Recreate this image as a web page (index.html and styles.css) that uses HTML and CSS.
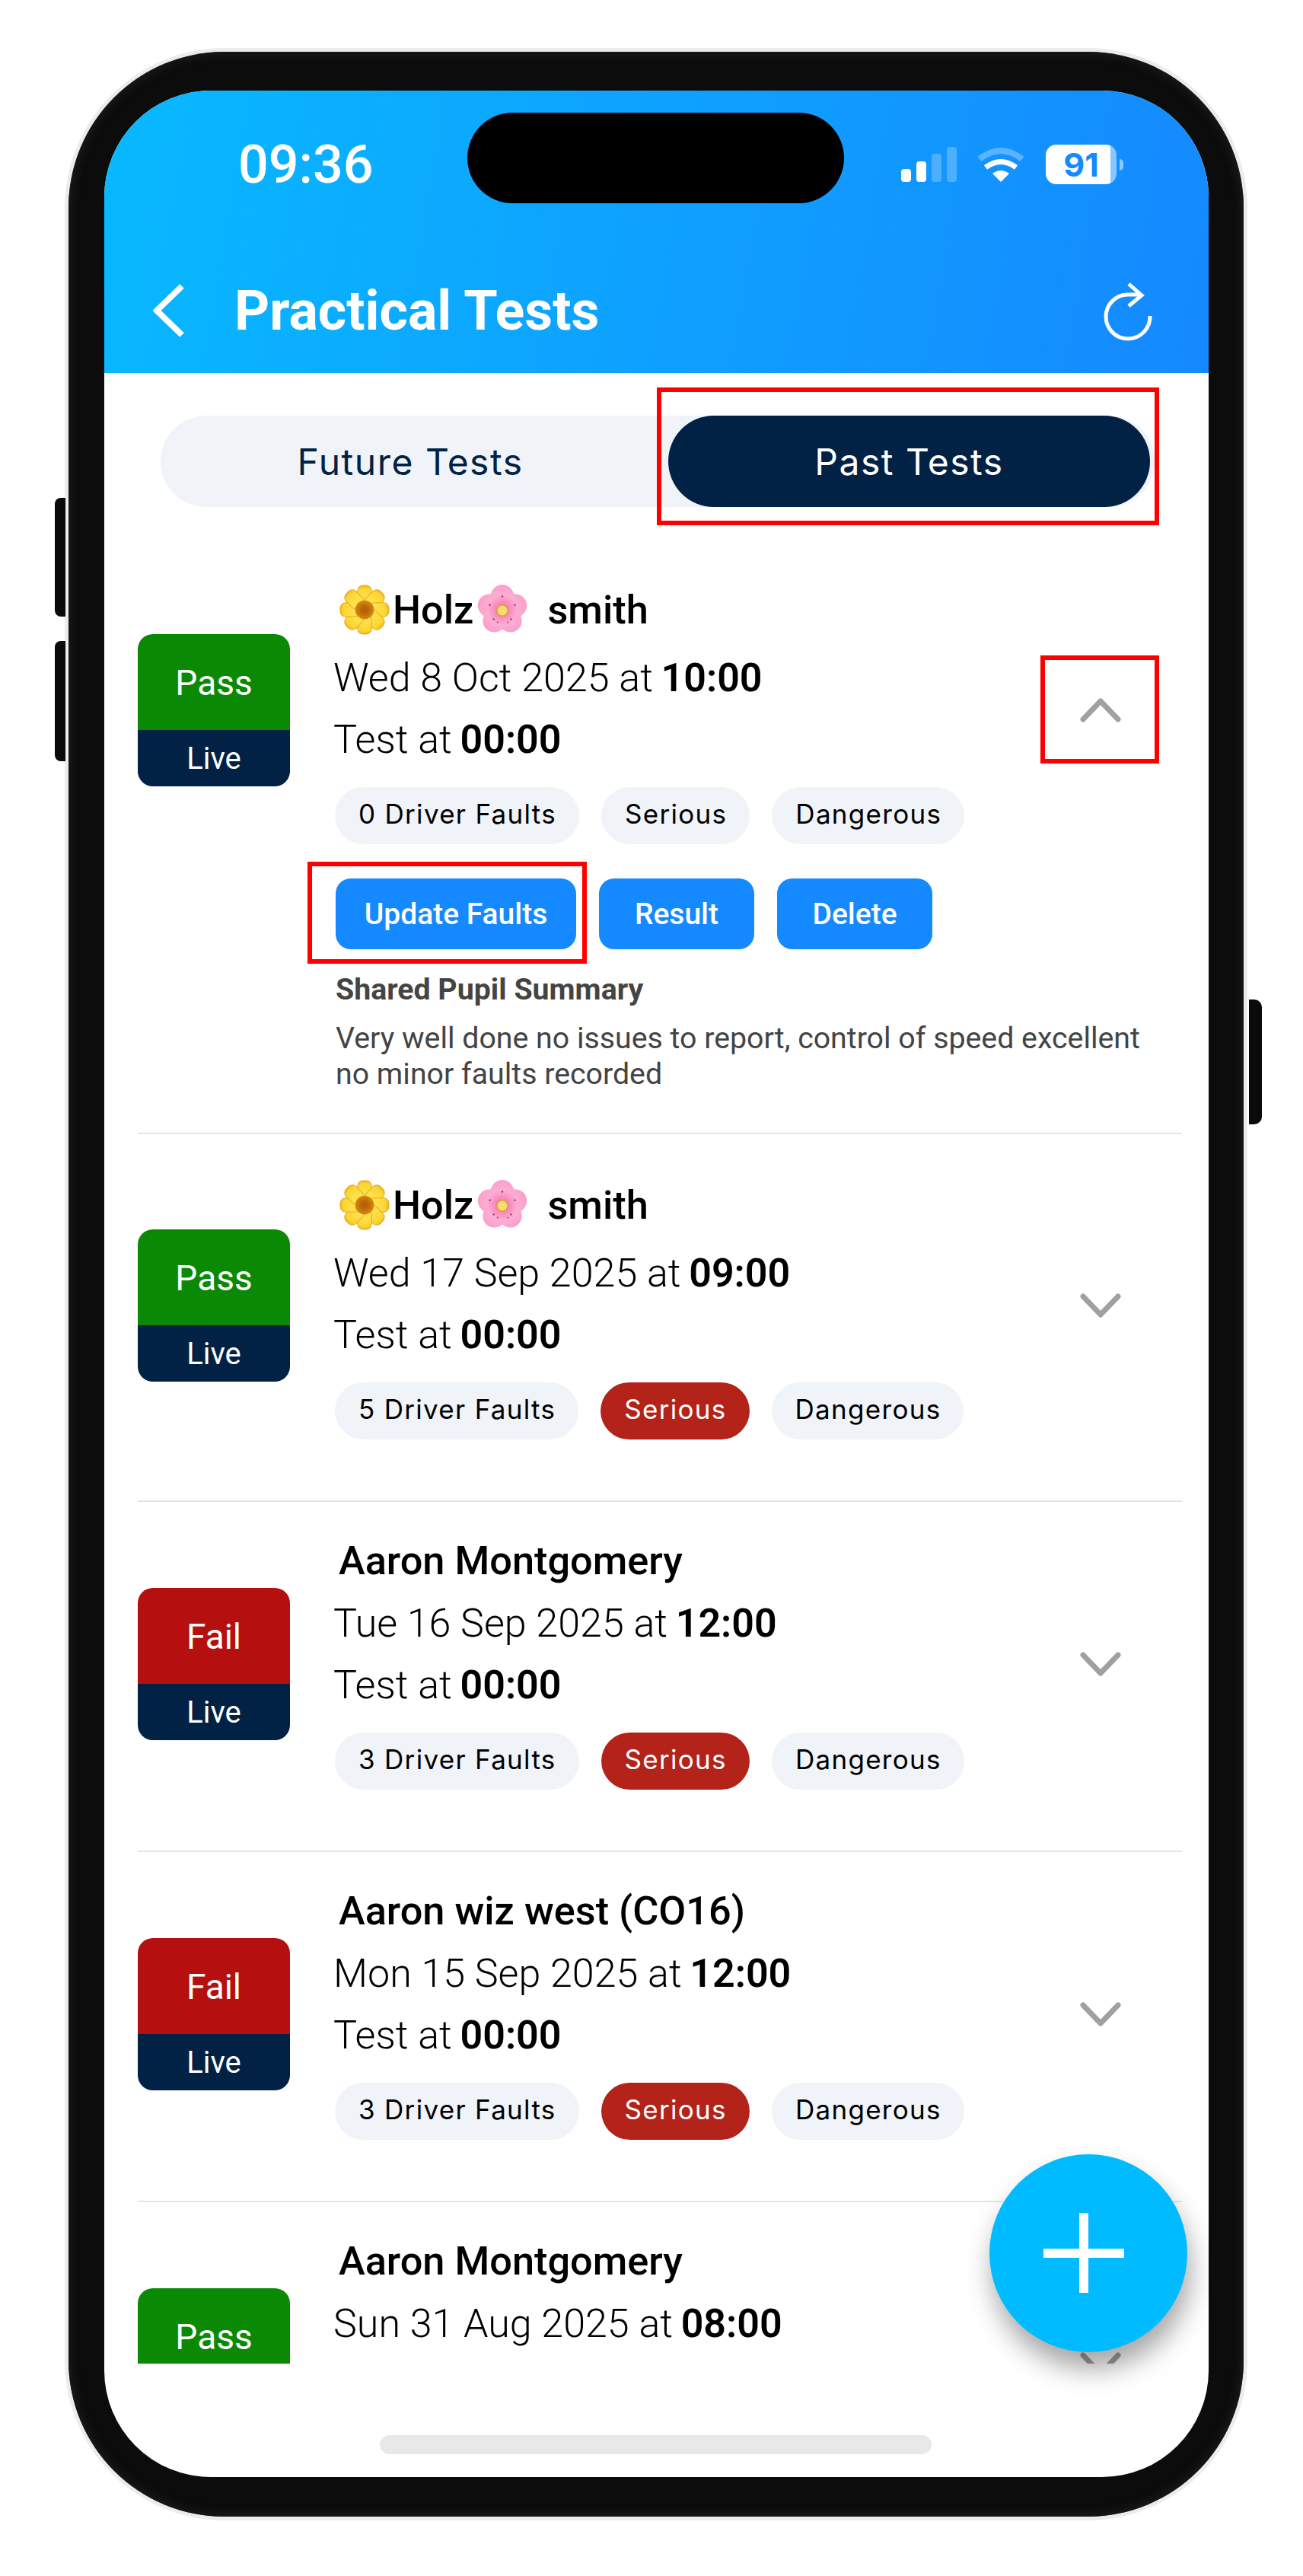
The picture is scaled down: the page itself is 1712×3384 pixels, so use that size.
FILE: index.html
```html
<!DOCTYPE html>
<html lang="en">
<head>
  <meta charset="UTF-8" />
  <meta name="viewport" content="width=device-width, initial-scale=1" />
  <title>Practical Tests</title>
  <link rel="stylesheet" href="styles.css">
</head>
<body>
  <svg class="defs" xmlns="http://www.w3.org/2000/svg">
    <defs>
      <radialGradient id="petal-yellow" gradientUnits="userSpaceOnUse" cx="32" cy="32" r="32">
        <stop offset="0.45" stop-color="#ffe14d" />
        <stop offset="0.85" stop-color="#fbd531" />
        <stop offset="1" stop-color="#e8a91c" />
      </radialGradient>
      <radialGradient id="petal-pink" gradientUnits="userSpaceOnUse" cx="32" cy="32" r="32">
        <stop offset="0.2" stop-color="#f77fb6" />
        <stop offset="0.6" stop-color="#fcaed3" />
        <stop offset="1" stop-color="#fb9ecb" />
      </radialGradient>
      <radialGradient id="flower-eye" cx="0.5" cy="0.5" r="0.5">
        <stop offset="0.3" stop-color="#b5620a" />
        <stop offset="1" stop-color="#d98a0c" />
      </radialGradient>
    </defs>
    <symbol id="sunflower" viewBox="0 0 64 64">
      <g fill="url(#petal-yellow)" stroke="#e8ab22" stroke-width="1">
        <rect x="23" y="1" width="18" height="25" rx="7" />
        <rect x="23" y="1" width="18" height="25" rx="7" transform="rotate(45 32 32)" />
        <rect x="23" y="1" width="18" height="25" rx="7" transform="rotate(90 32 32)" />
        <rect x="23" y="1" width="18" height="25" rx="7" transform="rotate(135 32 32)" />
        <rect x="23" y="1" width="18" height="25" rx="7" transform="rotate(180 32 32)" />
        <rect x="23" y="1" width="18" height="25" rx="7" transform="rotate(225 32 32)" />
        <rect x="23" y="1" width="18" height="25" rx="7" transform="rotate(270 32 32)" />
        <rect x="23" y="1" width="18" height="25" rx="7" transform="rotate(315 32 32)" />
      </g>
      <circle cx="32" cy="32" r="12" fill="url(#flower-eye)" />
    </symbol>
    <symbol id="blossom" viewBox="0 0 64 64">
      <g fill="url(#petal-pink)">
        <ellipse cx="32" cy="15.5" rx="15" ry="15.5" />
        <ellipse cx="32" cy="15.5" rx="15" ry="15.5" transform="rotate(72 32 32)" />
        <ellipse cx="32" cy="15.5" rx="15" ry="15.5" transform="rotate(144 32 32)" />
        <ellipse cx="32" cy="15.5" rx="15" ry="15.5" transform="rotate(216 32 32)" />
        <ellipse cx="32" cy="15.5" rx="15" ry="15.5" transform="rotate(288 32 32)" />
      </g>
      <g fill="#a8326f">
        <circle cx="32" cy="15" r="1.2" /><circle cx="16" cy="26" r="1.2" /><circle cx="48" cy="26" r="1.2" />
        <circle cx="21" cy="44" r="1.2" /><circle cx="43" cy="44" r="1.2" /><circle cx="26" cy="48" r="1" /><circle cx="39" cy="48" r="1" />
      </g>
      <circle cx="32" cy="33" r="7" fill="#f6dc72" stroke="#d9a233" stroke-width="1.5" />
    </symbol>
    <symbol id="chev-down" viewBox="0 0 54 32">
      <path d="M4 4 L27 28 L50 4" fill="none" stroke="#a0a0a0" stroke-width="7" stroke-linecap="round" stroke-linejoin="round" />
    </symbol>
  </svg>

  <div class="phone">
    <span class="side-btn side-btn-a"></span>
    <span class="side-btn side-btn-b"></span>
    <span class="side-btn side-btn-c"></span>

    <div class="screen">
      <div class="island"></div>

      <header class="app-header">
        <div class="status-bar">
          <span class="time">09:36</span>
          <div class="status-icons">
            <div class="signal">
              <span class="bar bar-1"></span>
              <span class="bar bar-2"></span>
              <span class="bar bar-3 dim"></span>
              <span class="bar bar-4 dim"></span>
            </div>
            <svg class="wifi" xmlns="http://www.w3.org/2000/svg" viewBox="0 0 64 46">
              <path d="M4 16 Q32 -6 60 16" fill="none" stroke="#fff" stroke-opacity=".3" stroke-width="8" />
              <path d="M12 27 Q32 12 52 27" fill="none" stroke="#fff" stroke-width="7" />
              <path d="M32 46 L21 35 Q32 27 43 35 Z" fill="#fff" />
            </svg>
            <div class="battery">91</div>
            <span class="battery-nub"></span>
          </div>
        </div>
        <div class="nav-bar">
          <svg class="back" xmlns="http://www.w3.org/2000/svg" viewBox="0 0 41 70">
            <path d="M38 3 L5 35 L38 67" fill="none" stroke="#fff" stroke-width="8" />
          </svg>
          <h1>Practical Tests</h1>
          <svg class="refresh" xmlns="http://www.w3.org/2000/svg" viewBox="0 0 70 80">
            <path d="M61 47 A29 29 0 1 1 32 19 H50 M33 5 L50 20 L33 34" fill="none" stroke="#fff" stroke-width="5" />
          </svg>
        </div>
      </header>

      <div class="tabs">
        <div class="tab">Future Tests</div>
        <div class="tab active">Past Tests<span class="mark mark-tab"></span></div>
      </div>

      <div class="test-list">
        <div class="test-row">
          <div class="row-main">
            <div class="badge"><span class="badge-result pass">Pass</span><span class="badge-type">Live</span></div>
            <div class="info">
              <div class="name has-flowers"><svg class="emoji sun"><use href="#sunflower" /></svg>Holz<svg class="emoji pink"><use href="#blossom" /></svg><span class="surname">smith</span></div>
              <div class="when">Wed 8 Oct 2025 at <b>10:00</b></div>
              <div class="when">Test at <b>00:00</b></div>
              <div class="chips">
                <span class="chip">0 Driver Faults</span>
                <span class="chip">Serious</span>
                <span class="chip">Dangerous</span>
              </div>
            </div>
            <div class="toggle">
              <svg class="chevron up"><use href="#chev-down" /></svg>
              <span class="mark mark-chevron"></span>
            </div>
          </div>
          <div class="row-extra">
            <div class="actions">
              <button class="update">Update Faults<span class="mark mark-update"></span></button>
              <button>Result</button>
              <button>Delete</button>
            </div>
            <h4>Shared Pupil Summary</h4>
            <p>Very well done no issues to report, control of speed excellent<br>no minor faults recorded</p>
          </div>
        </div>

        <div class="test-row">
          <div class="row-main">
            <div class="badge"><span class="badge-result pass">Pass</span><span class="badge-type">Live</span></div>
            <div class="info">
              <div class="name has-flowers"><svg class="emoji sun"><use href="#sunflower" /></svg>Holz<svg class="emoji pink"><use href="#blossom" /></svg><span class="surname">smith</span></div>
              <div class="when">Wed 17 Sep 2025 at <b>09:00</b></div>
              <div class="when">Test at <b>00:00</b></div>
              <div class="chips">
                <span class="chip">5 Driver Faults</span>
                <span class="chip serious">Serious</span>
                <span class="chip">Dangerous</span>
              </div>
            </div>
            <div class="toggle"><svg class="chevron"><use href="#chev-down" /></svg></div>
          </div>
        </div>

        <div class="test-row">
          <div class="row-main">
            <div class="badge"><span class="badge-result fail">Fail</span><span class="badge-type">Live</span></div>
            <div class="info">
              <div class="name">Aaron Montgomery</div>
              <div class="when">Tue 16 Sep 2025 at <b>12:00</b></div>
              <div class="when">Test at <b>00:00</b></div>
              <div class="chips">
                <span class="chip">3 Driver Faults</span>
                <span class="chip serious">Serious</span>
                <span class="chip">Dangerous</span>
              </div>
            </div>
            <div class="toggle"><svg class="chevron"><use href="#chev-down" /></svg></div>
          </div>
        </div>

        <div class="test-row">
          <div class="row-main">
            <div class="badge"><span class="badge-result fail">Fail</span><span class="badge-type">Live</span></div>
            <div class="info">
              <div class="name">Aaron wiz west (CO16)</div>
              <div class="when">Mon 15 Sep 2025 at <b>12:00</b></div>
              <div class="when">Test at <b>00:00</b></div>
              <div class="chips">
                <span class="chip">3 Driver Faults</span>
                <span class="chip serious">Serious</span>
                <span class="chip">Dangerous</span>
              </div>
            </div>
            <div class="toggle"><svg class="chevron"><use href="#chev-down" /></svg></div>
          </div>
        </div>

        <div class="test-row">
          <div class="row-main">
            <div class="badge"><span class="badge-result pass">Pass</span><span class="badge-type">Live</span></div>
            <div class="info">
              <div class="name">Aaron Montgomery</div>
              <div class="when">Sun 31 Aug 2025 at <b>08:00</b></div>
              <div class="when">Test at <b>00:00</b></div>
              <div class="chips">
                <span class="chip">0 Driver Faults</span>
                <span class="chip">Serious</span>
                <span class="chip">Dangerous</span>
              </div>
            </div>
            <div class="toggle"><svg class="chevron"><use href="#chev-down" /></svg></div>
          </div>
        </div>
      </div>

      <div class="home-area"><span class="home-bar"></span></div>

      <div class="fab"><span class="plus"></span></div>
    </div>
  </div>
</body>
</html>
```

FILE: styles.css
```css
* {
  margin: 0;
  padding: 0;
  box-sizing: border-box;
}
body {
  font-family: 'Roboto', sans-serif;
  background-color: #ffffff;
  color: #000000;
  height: 3384px;
  overflow: hidden;
}
.defs {
  position: absolute;
  width: 0;
  height: 0;
}
.phone {
  position: relative;
  width: 1544px;
  height: 3238px;
  margin: 68px 0 0 90px;
  padding: 51px 46px 52px 47px;
  background: #0c0c0c;
  border-radius: 205px;
  box-shadow: 0 0 0 5px #ececec, inset 0 0 12px 4px #1b1b1b;
}
.side-btn {
  position: absolute;
  width: 14px;
  background: #0a0a0a;
}
.side-btn-a {
  left: -18px;
  top: 586px;
  height: 156px;
  border-radius: 8px 0 0 8px;
}
.side-btn-b {
  left: -18px;
  top: 774px;
  height: 158px;
  border-radius: 8px 0 0 8px;
}
.side-btn-c {
  right: -24px;
  top: 1245px;
  height: 164px;
  width: 17px;
  border-radius: 0 10px 10px 0;
}
.screen {
  position: relative;
  display: flex;
  flex-direction: column;
  width: 1451px;
  height: 3135px;
  background: #ffffff;
  border-radius: 140px;
  overflow: hidden;
}
.island {
  position: absolute;
  left: 477px;
  top: 29px;
  width: 495px;
  height: 119px;
  background: #000000;
  border-radius: 60px;
}

/* header */
.app-header {
  flex: none;
  height: 371px;
  background: linear-gradient(100deg, #08b9ff, #1589ff);
  color: #ffffff;
}
.status-bar {
  display: flex;
  justify-content: space-between;
  align-items: center;
  height: 207px;
  padding: 71px 112px 84px 176px;
}
.time {
  font-size: 70px;
  font-weight: 500;
}
.status-icons {
  display: flex;
  align-items: center;
}
.signal {
  display: flex;
  align-items: flex-end;
  gap: 7px;
  height: 46px;
  margin-right: 26px;
}
.bar {
  width: 13px;
  background: #ffffff;
  border-radius: 4px;
}
.bar.dim {
  opacity: 0.25;
}
.bar-1 { height: 17px; }
.bar-2 { height: 27px; }
.bar-3 { height: 37px; }
.bar-4 { height: 46px; }
.wifi {
  width: 64px;
  height: 46px;
  margin-right: 27px;
}
.battery {
  width: 93px;
  height: 52px;
  border-radius: 14px;
  background: linear-gradient(90deg, #ffffff 91%, rgba(255, 255, 255, 0.5) 91%);
  color: #1589ff;
  font-family: 'Inter', sans-serif;
  font-size: 43px;
  font-weight: 700;
  line-height: 52px;
  text-align: center;
}
.battery-nub {
  width: 5px;
  height: 15px;
  margin-left: 4px;
  background: rgba(255, 255, 255, 0.5);
  border-radius: 0 6px 6px 0;
}
.nav-bar {
  display: flex;
  align-items: center;
  height: 164px;
  padding: 0 68px 0 64px;
}
.back {
  width: 41px;
  height: 70px;
}
.nav-bar h1 {
  margin-left: 66px;
  font-size: 71.8px;
  font-weight: 700;
}
.refresh {
  width: 70px;
  height: 80px;
  margin-left: auto;
}

/* tabs */
.tabs {
  flex: none;
  display: flex;
  gap: 11px;
  height: 120px;
  margin: 56px 71px 42px 74px;
  padding-right: 6px;
  background: #f0f3f8;
  border-radius: 60px;
}
.tab {
  position: relative;
  flex: 1;
  display: flex;
  align-items: center;
  justify-content: center;
  font-family: 'Inter', sans-serif;
  font-size: 48px;
  letter-spacing: 1.5px;
  color: #012145;
  border-radius: 60px;
}
.tab:first-child {
  flex: none;
  width: 656px;
}
.tab.active {
  background: #012145;
  color: #ffffff;
}

/* red marks drawn on top of the screenshot */
.mark {
  position: absolute;
  border: 6px solid #ff0000;
  pointer-events: none;
}
.mark-tab {
  inset: -37px -12px -24px -15px;
}
.mark-chevron {
  left: -52px;
  top: -56px;
  width: 156px;
  height: 142px;
}
.mark-update {
  inset: -22px -14px -19px -37px;
}

/* list */
.test-list {
  flex: 1;
  min-height: 0;
  padding: 0 35px 0 44px;
  overflow: hidden;
}
.test-row {
  padding: 36px 0 80px;
  border-bottom: 2px solid #e4e4e4;
}
.test-row:nth-child(1) {
  padding-bottom: 0;
}
.row-main {
  display: flex;
  align-items: center;
}
.badge {
  flex: none;
  display: flex;
  flex-direction: column;
  width: 200px;
  height: 200px;
  margin-top: 12px;
  border-radius: 20px;
  overflow: hidden;
  color: #ffffff;
  text-align: center;
}
.badge-result {
  height: 126px;
  font-size: 46px;
  line-height: 128px;
}
.badge-result.pass {
  background: #0a8a04;
}
.badge-result.fail {
  background: #b50f0f;
}
.badge-type {
  flex: 1;
  background: #012145;
  font-size: 40px;
  line-height: 76px;
}
.info {
  flex: 1;
  margin-left: 59px;
}
.name {
  height: 83px;
  padding-left: 5px;
  font-size: 52.3px;
  font-weight: 500;
  line-height: 82px;
  white-space: nowrap;
}
.name.has-flowers {
  display: flex;
  align-items: center;
  height: 106px;
  padding: 16px 0 8px 6px;
}
.emoji {
  width: 66px;
  height: 66px;
}
.emoji.sun {
  margin-right: 4px;
}
.emoji.pink {
  margin-left: 5px;
}
.surname {
  margin-left: 26px;
}
.when {
  height: 81px;
  margin-left: -2px;
  font-size: 52px;
  font-weight: 300;
  line-height: 81px;
}
.when b {
  margin-left: -2px;
  font-weight: 600;
}
.chips {
  display: flex;
  gap: 29px;
  margin-top: 22px;
}
.chip {
  height: 75px;
  padding: 0 30px 0 31px;
  background: #f0f3f8;
  border-radius: 38px;
  font-family: 'Inter', sans-serif;
  font-size: 35px;
  letter-spacing: 1.3px;
  line-height: 71px;
}
.chip.serious {
  background: #b3231a;
  color: #ffffff;
}
.toggle {
  position: relative;
  flex: none;
  width: 54px;
  height: 32px;
  margin: 12px 80px 0 0;
}
.chevron {
  display: block;
  width: 54px;
  height: 32px;
}
.chevron.up {
  transform: scaleY(-1);
}
.row-extra {
  margin: 45px 0 0 260px;
  padding-bottom: 53px;
}
.actions {
  display: flex;
  gap: 30px;
}
.actions button {
  position: relative;
  width: 204px;
  height: 93px;
  background: #1589ff;
  border: none;
  border-radius: 20px;
  color: #ffffff;
  font-family: 'Roboto', sans-serif;
  font-size: 39px;
  font-weight: 500;
}
.actions button.update {
  width: 316px;
}
.row-extra h4 {
  margin-top: 30px;
  color: #444444;
  font-size: 39.3px;
  font-weight: 700;
  line-height: 46px;
}
.row-extra p {
  margin-top: 18px;
  color: #444444;
  font-size: 39.3px;
  line-height: 47px;
}
.home-area {
  flex: none;
  height: 149px;
  padding-top: 94px;
}
.home-bar {
  display: block;
  width: 725px;
  height: 25px;
  margin-left: 362px;
  background: #e8e8e8;
  border-radius: 13px;
}
.fab {
  position: absolute;
  left: 1163px;
  top: 2711px;
  width: 260px;
  height: 260px;
  background: #00bbff;
  border-radius: 50%;
  box-shadow: 4px 22px 34px rgba(0, 0, 0, 0.35);
}
.plus {
  position: absolute;
  left: 71px;
  top: 77px;
  width: 106px;
  height: 105px;
  background:
    linear-gradient(#ffffff, #ffffff) center / 12px 100% no-repeat,
    linear-gradient(#ffffff, #ffffff) center / 100% 12px no-repeat;
}
```
